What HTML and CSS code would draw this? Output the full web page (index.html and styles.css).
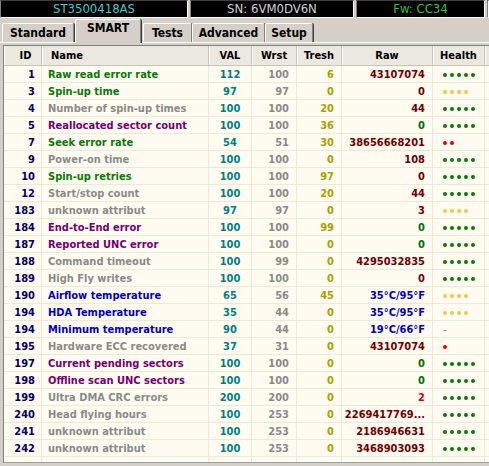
FILE: index.html
```html
<!DOCTYPE html>
<html>
<head>
<meta charset="utf-8">
<link rel="stylesheet" href="styles.css">
</head>
<body>
<div class="topbar">
  <div class="panel p1"><span class="model">ST3500418AS</span></div>
  <div class="panel p2"><span class="sn">SN: 6VM0DV6N</span></div>
  <div class="panel p3"><span class="fw">Fw: CC34</span></div>
  <div class="panel p4"></div>
</div>
<div class="tabs">
  <div class="tab t1">Standard</div>
  <div class="tab t2 active">SMART</div>
  <div class="tab t3">Tests</div>
  <div class="tab t4">Advanced</div>
  <div class="tab t5">Setup</div>
</div>
<div class="content">
  <div class="grid">
    <div class="row head">
      <div class="c id">ID</div><div class="c name">Name</div><div class="c val">VAL</div><div class="c wrst">Wrst</div><div class="c tresh">Tresh</div><div class="c raw">Raw</div><div class="c health">Health</div><div class="c fill"></div>
    </div>
    <div class="row"><div class="c id">1</div><div class="c name green">Raw read error rate</div><div class="c val">112</div><div class="c wrst">100</div><div class="c tresh">6</div><div class="c raw dred">43107074</div><div class="c health"><i class="d g"></i><i class="d g"></i><i class="d g"></i><i class="d g"></i><i class="d g"></i></div><div class="c fill"></div></div>
    <div class="row"><div class="c id">3</div><div class="c name green">Spin-up time</div><div class="c val">97</div><div class="c wrst">97</div><div class="c tresh">0</div><div class="c raw dred">0</div><div class="c health"><i class="d y"></i><i class="d y"></i><i class="d y"></i><i class="d y"></i></div><div class="c fill"></div></div>
    <div class="row"><div class="c id">4</div><div class="c name gray">Number of spin-up times</div><div class="c val">100</div><div class="c wrst">100</div><div class="c tresh">20</div><div class="c raw dred">44</div><div class="c health"><i class="d g"></i><i class="d g"></i><i class="d g"></i><i class="d g"></i><i class="d g"></i></div><div class="c fill"></div></div>
    <div class="row"><div class="c id">5</div><div class="c name purple">Reallocated sector count</div><div class="c val">100</div><div class="c wrst">100</div><div class="c tresh">36</div><div class="c raw grn">0</div><div class="c health"><i class="d g"></i><i class="d g"></i><i class="d g"></i><i class="d g"></i><i class="d g"></i></div><div class="c fill"></div></div>
    <div class="row"><div class="c id">7</div><div class="c name green">Seek error rate</div><div class="c val">54</div><div class="c wrst">51</div><div class="c tresh">30</div><div class="c raw dred">38656668201</div><div class="c health"><i class="d r"></i><i class="d r"></i></div><div class="c fill"></div></div>
    <div class="row"><div class="c id">9</div><div class="c name gray">Power-on time</div><div class="c val">100</div><div class="c wrst">100</div><div class="c tresh">0</div><div class="c raw dred">108</div><div class="c health"><i class="d g"></i><i class="d g"></i><i class="d g"></i><i class="d g"></i><i class="d g"></i></div><div class="c fill"></div></div>
    <div class="row"><div class="c id">10</div><div class="c name green">Spin-up retries</div><div class="c val">100</div><div class="c wrst">100</div><div class="c tresh">97</div><div class="c raw dred">0</div><div class="c health"><i class="d g"></i><i class="d g"></i><i class="d g"></i><i class="d g"></i><i class="d g"></i></div><div class="c fill"></div></div>
    <div class="row"><div class="c id">12</div><div class="c name gray">Start/stop count</div><div class="c val">100</div><div class="c wrst">100</div><div class="c tresh">20</div><div class="c raw dred">44</div><div class="c health"><i class="d g"></i><i class="d g"></i><i class="d g"></i><i class="d g"></i><i class="d g"></i></div><div class="c fill"></div></div>
    <div class="row"><div class="c id">183</div><div class="c name gray">unknown attribut</div><div class="c val">97</div><div class="c wrst">97</div><div class="c tresh">0</div><div class="c raw dred">3</div><div class="c health"><i class="d y"></i><i class="d y"></i><i class="d y"></i><i class="d y"></i></div><div class="c fill"></div></div>
    <div class="row"><div class="c id">184</div><div class="c name purple">End-to-End error</div><div class="c val">100</div><div class="c wrst">100</div><div class="c tresh">99</div><div class="c raw grn">0</div><div class="c health"><i class="d g"></i><i class="d g"></i><i class="d g"></i><i class="d g"></i><i class="d g"></i></div><div class="c fill"></div></div>
    <div class="row"><div class="c id">187</div><div class="c name purple">Reported UNC error</div><div class="c val">100</div><div class="c wrst">100</div><div class="c tresh">0</div><div class="c raw grn">0</div><div class="c health"><i class="d g"></i><i class="d g"></i><i class="d g"></i><i class="d g"></i><i class="d g"></i></div><div class="c fill"></div></div>
    <div class="row"><div class="c id">188</div><div class="c name gray">Command timeout</div><div class="c val">100</div><div class="c wrst">99</div><div class="c tresh">0</div><div class="c raw dred">4295032835</div><div class="c health"><i class="d g"></i><i class="d g"></i><i class="d g"></i><i class="d g"></i><i class="d g"></i></div><div class="c fill"></div></div>
    <div class="row"><div class="c id">189</div><div class="c name gray">High Fly writes</div><div class="c val">100</div><div class="c wrst">100</div><div class="c tresh">0</div><div class="c raw dred">0</div><div class="c health"><i class="d g"></i><i class="d g"></i><i class="d g"></i><i class="d g"></i><i class="d g"></i></div><div class="c fill"></div></div>
    <div class="row"><div class="c id">190</div><div class="c name blue">Airflow temperature</div><div class="c val">65</div><div class="c wrst">56</div><div class="c tresh">45</div><div class="c raw blue">35°C/95°F</div><div class="c health"><i class="d y"></i><i class="d y"></i><i class="d y"></i><i class="d y"></i></div><div class="c fill"></div></div>
    <div class="row"><div class="c id">194</div><div class="c name blue">HDA Temperature</div><div class="c val">35</div><div class="c wrst">44</div><div class="c tresh">0</div><div class="c raw blue">35°C/95°F</div><div class="c health"><i class="d y"></i><i class="d y"></i><i class="d y"></i><i class="d y"></i></div><div class="c fill"></div></div>
    <div class="row"><div class="c id">194</div><div class="c name blue">Minimum temperature</div><div class="c val">90</div><div class="c wrst">44</div><div class="c tresh">0</div><div class="c raw blue">19°C/66°F</div><div class="c health"><span class="dash">-</span></div><div class="c fill"></div></div>
    <div class="row"><div class="c id">195</div><div class="c name gray">Hardware ECC recovered</div><div class="c val">37</div><div class="c wrst">31</div><div class="c tresh">0</div><div class="c raw dred">43107074</div><div class="c health"><i class="d r"></i></div><div class="c fill"></div></div>
    <div class="row"><div class="c id">197</div><div class="c name purple">Current pending sectors</div><div class="c val">100</div><div class="c wrst">100</div><div class="c tresh">0</div><div class="c raw grn">0</div><div class="c health"><i class="d g"></i><i class="d g"></i><i class="d g"></i><i class="d g"></i><i class="d g"></i></div><div class="c fill"></div></div>
    <div class="row"><div class="c id">198</div><div class="c name purple">Offline scan UNC sectors</div><div class="c val">100</div><div class="c wrst">100</div><div class="c tresh">0</div><div class="c raw grn">0</div><div class="c health"><i class="d g"></i><i class="d g"></i><i class="d g"></i><i class="d g"></i><i class="d g"></i></div><div class="c fill"></div></div>
    <div class="row"><div class="c id">199</div><div class="c name gray">Ultra DMA CRC errors</div><div class="c val">200</div><div class="c wrst">200</div><div class="c tresh">0</div><div class="c raw red">2</div><div class="c health"><i class="d g"></i><i class="d g"></i><i class="d g"></i><i class="d g"></i><i class="d g"></i></div><div class="c fill"></div></div>
    <div class="row"><div class="c id">240</div><div class="c name gray">Head flying hours</div><div class="c val">100</div><div class="c wrst">253</div><div class="c tresh">0</div><div class="c raw dred">2269417769...</div><div class="c health"><i class="d g"></i><i class="d g"></i><i class="d g"></i><i class="d g"></i><i class="d g"></i></div><div class="c fill"></div></div>
    <div class="row"><div class="c id">241</div><div class="c name gray">unknown attribut</div><div class="c val">100</div><div class="c wrst">253</div><div class="c tresh">0</div><div class="c raw dred">2186946631</div><div class="c health"><i class="d g"></i><i class="d g"></i><i class="d g"></i><i class="d g"></i><i class="d g"></i></div><div class="c fill"></div></div>
    <div class="row"><div class="c id">242</div><div class="c name gray">unknown attribut</div><div class="c val">100</div><div class="c wrst">253</div><div class="c tresh">0</div><div class="c raw dred">3468903093</div><div class="c health"><i class="d g"></i><i class="d g"></i><i class="d g"></i><i class="d g"></i><i class="d g"></i></div><div class="c fill"></div></div>
    <div class="row filler"><div class="c id"></div><div class="c name"></div><div class="c val"></div><div class="c wrst"></div><div class="c tresh"></div><div class="c raw"></div><div class="c health"></div><div class="c fill"></div></div>
  </div>
</div>
</body>
</html>
```

FILE: styles.css
```css
* { box-sizing: border-box; }
html, body {
  margin: 0;
  padding: 0;
}
body {
  width: 489px;
  height: 466px;
  overflow: hidden;
  background: #d4d0c8;
  font-family: "DejaVu Sans Condensed", "DejaVu Sans", sans-serif;
}
.topbar {
  display: flex;
  gap: 2px;
  height: 18px;
}
.panel {
  background: #000;
  border-top: 1px solid #404040;
  border-left: 1px solid #808080;
  border-right: 1px solid #ffffff;
  border-bottom: 1px solid #ffffff;
  display: flex;
  align-items: center;
  justify-content: center;
  font-size: 13px;
  line-height: 16px;
}
.p1 { width: 188px; }
.p2 { width: 164px; }
.p3 { width: 129px; }
.p4 { flex: 1; }
.model { color: #48c8c8; }
.sn { color: #d0d0d0; }
.fw { color: #38c038; }

.tabs {
  display: flex;
  align-items: flex-end;
  height: 24px;
  padding-left: 2px;
}
.tab {
  height: 19px;
  background: #d4d0c8;
  border-top: 1px solid #ffffff;
  border-left: 1px solid #ffffff;
  border-right: 1px solid #808080;
  border-radius: 2px 2px 0 0;
  box-shadow: 1px 0 0 #404040;
  font-weight: bold;
  font-size: 12px;
  line-height: 18px;
  text-align: center;
  color: #000;
}
.tab.active {
  height: 24px;
  margin-bottom: -1px;
  position: relative;
  z-index: 1;
  line-height: 17px;
}
.t1 { width: 72px; }
.t2 { width: 66px; margin-left: 1px; }
.t3 { width: 49px; margin-left: 2px; }
.t4 { width: 73px; }
.t5 { width: 48px; }

.content {
  border-top: 1px solid #ffffff;
  padding: 2px 0 0 3px;
}
.grid {
  border-top: 1px solid #808080;
  border-left: 1px solid #808080;
  background: #fffbf0;
  font-size: 11px;
  font-weight: bold;
}
.row {
  display: grid;
  grid-template-columns: 38px 167px 43px 45px 45px 91px 52px 1fr;
  height: 17px;
  border-bottom: 1px solid #ece9d8;
}
.row .c {
  padding-top: 1px;
  line-height: 16px;
}
.row.head {
  height: 20px;
  background: #ebe8df;
  border-bottom: 1px solid #c8c4b8;
}
.row.head .c {
  padding-top: 0;
  line-height: 20px;
  color: #000;
}
.row.filler { height: 6px; border-bottom: 1px solid #a0a0a0; }
.c {
  border-right: 1px solid #ece9d8;
  white-space: nowrap;
  overflow: hidden;
}
.head .c {
  border-right: 1px solid #c8c4b8;
  box-shadow: inset 1px 0 0 #ffffff;
  text-align: center;
}
.head .id { padding-left: 6px; padding-right: 0; text-align: center; }
.head .name { text-align: left; padding-left: 9px; }
.head .wrst, .head .tresh, .head .raw, .head .val, .head .health { text-align: center; padding-left: 0; padding-right: 0; }
.head .c.fill { border-right: none; }

.id { text-align: right; padding-right: 6px; color: #000066; }
.name { padding-left: 6px; }
.val { text-align: center; color: #008080; }
.wrst { text-align: right; padding-right: 7px; color: #8a8a8a; }
.tresh { text-align: right; padding-right: 7px; color: #a8a000; }
.raw { text-align: right; padding-right: 7px; }
.health {
  padding-left: 10px;
  display: flex;
  align-items: center;
  gap: 3px;
}
.head .health { display: block; }
.fill { border-right: none; }

.green { color: #0b780b; }
.gray { color: #8a8a8a; }
.purple { color: #740074; }
.blue { color: #0000c8; }
.dred { color: #700000; }
.grn { color: #007000; }
.red { color: #e00000; }

.d {
  display: block;
  width: 4px;
  height: 4px;
  border-radius: 50%;
}
.d.g { background: #0a780a; }
.d.y { background: #f8c448; }
.d.r { background: #e80000; }
.dash { color: #808080; font-weight: normal; }
```
